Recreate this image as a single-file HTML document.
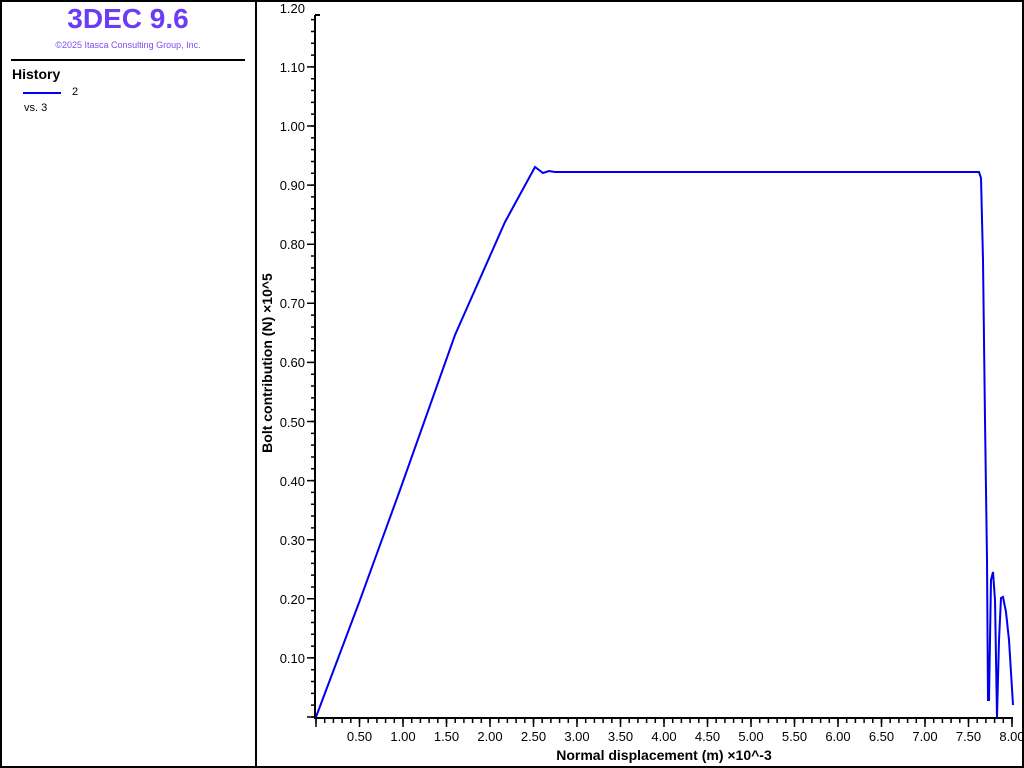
<!DOCTYPE html>
<html><head><style>
html,body{margin:0;padding:0;background:#fff;}
body{width:1024px;height:768px;position:relative;overflow:hidden;font-family:"Liberation Sans",sans-serif;}
.frame{position:absolute;left:0;top:0;width:1020px;height:764px;border:2px solid #000;}
.div{position:absolute;left:255px;top:0;width:2px;height:768px;background:#000;}
.t1{position:absolute;left:0;width:256px;top:3px;text-align:center;color:#6a3cf5;font-weight:bold;font-size:28px;}
.t2{position:absolute;left:0;width:256px;top:40px;text-align:center;color:#7b4cf0;font-size:9px;}
.hr{position:absolute;left:11px;top:59px;width:234px;height:2px;background:#000;}
.h{position:absolute;left:12px;top:66px;font-weight:bold;font-size:14px;}
.leg{position:absolute;left:23px;top:92px;width:38px;height:2px;background:#0000ee;}
.n2{position:absolute;left:72px;top:86px;font-size:11px;}
.vs{position:absolute;left:24px;top:102px;font-size:11px;}
</style></head><body>
<div class="frame"></div><div class="div"></div>
<div class="t1">3DEC 9.6</div>
<div class="t2">©2025 Itasca Consulting Group, Inc.</div>
<div class="hr"></div>
<div class="h">History</div>
<div class="leg"></div><div class="n2">2</div><div class="vs">vs. 3</div>
<svg width="1024" height="768" style="position:absolute;left:0;top:0" font-family="Liberation Sans, sans-serif" font-size="13">
<g stroke="#000" fill="none">
<path d="M315 15V718H1013" stroke-width="2"/>
<path d="M315 15H320" stroke-width="2"/>
<path d="M313.5 717.75V14" stroke-width="5" stroke-dasharray="1.5 10.32"/>
<path d="M311 717.75V14" stroke-width="8" stroke-dasharray="1.5 57.6"/>
<path d="M315.25 720.5H1014" stroke-width="5" stroke-dasharray="1.5 7.2"/>
<path d="M315.25 722.5H1014" stroke-width="9" stroke-dasharray="1.5 42"/>
</g>
<g text-anchor="end">
<text x="305" y="663">0.10</text><text x="305" y="604">0.20</text><text x="305" y="545">0.30</text>
<text x="305" y="486">0.40</text><text x="305" y="427">0.50</text><text x="305" y="367">0.60</text>
<text x="305" y="308">0.70</text><text x="305" y="249">0.80</text><text x="305" y="190">0.90</text>
<text x="305" y="131">1.00</text><text x="305" y="72">1.10</text><text x="305" y="13">1.20</text>
</g>
<g text-anchor="middle">
<text x="359.5" y="741">0.50</text><text x="403" y="741">1.00</text><text x="446.5" y="741">1.50</text>
<text x="490" y="741">2.00</text><text x="533.5" y="741">2.50</text><text x="577" y="741">3.00</text>
<text x="620.5" y="741">3.50</text><text x="664" y="741">4.00</text><text x="707.5" y="741">4.50</text>
<text x="751" y="741">5.00</text><text x="794.5" y="741">5.50</text><text x="838" y="741">6.00</text>
<text x="881.5" y="741">6.50</text><text x="925" y="741">7.00</text><text x="968.5" y="741">7.50</text>
<text x="1012" y="741">8.00</text>
</g>
<text x="664" y="760" text-anchor="middle" font-weight="bold" font-size="14">Normal displacement (m) ×10^-3</text>
<text transform="translate(272 363) rotate(-90)" text-anchor="middle" font-weight="bold" font-size="14">Bolt contribution (N) ×10^5</text>
<polyline fill="none" stroke="#0000ee" stroke-width="2" points="316,717 360,600 400,490 455,335 505,222 535,167 543,173 549,171 555,172 979,172 981,178 983,260 985,420 987,560 988,700 989,700 991,580 993,572 995,600 997,717 999,640 1001,598 1003,597 1006,612 1009,640 1013,705"/>
</svg>
</body></html>
